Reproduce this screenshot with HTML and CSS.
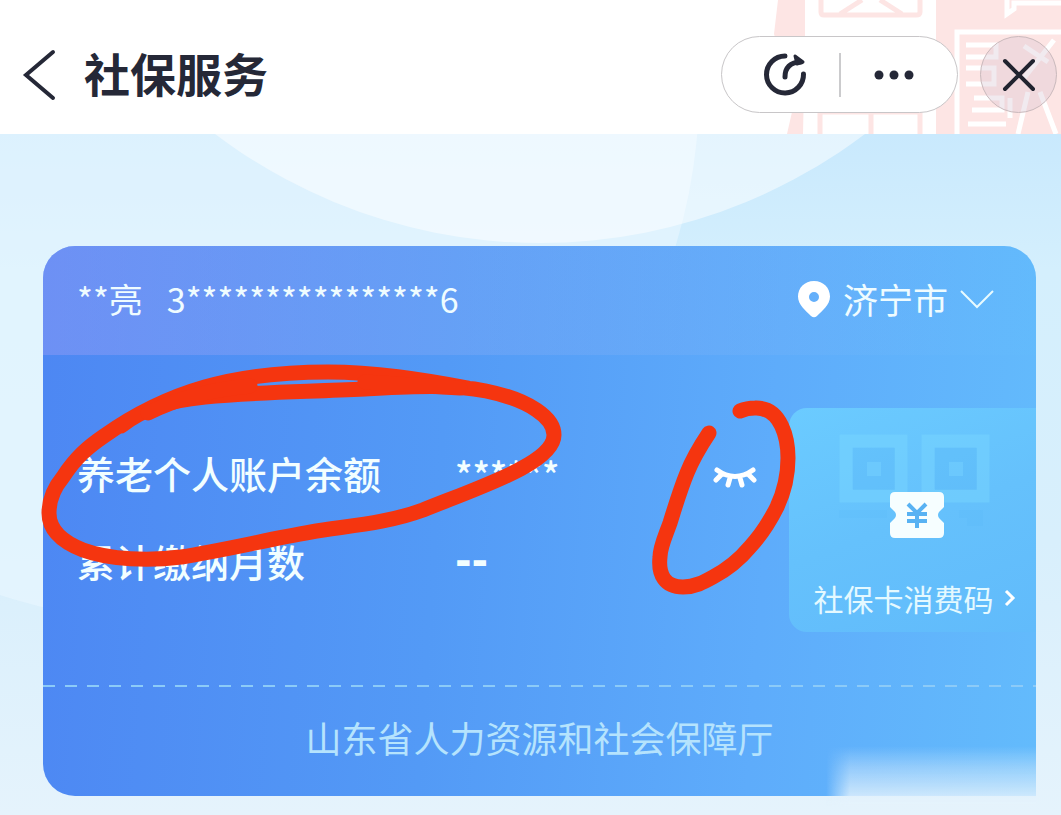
FILE: index.html
```html
<!DOCTYPE html>
<html lang="zh-CN">
<head>
    <meta charset="UTF-8">
    <meta name="viewport" content="width=device-width, initial-scale=1.0">
    <title>社保服务</title>
    <link rel="stylesheet" href="styles.css">
</head>
<body>
    <header class="navbar">
        <svg class="seal" viewBox="0 0 291 134" width="291" height="134" aria-hidden="true">
            <g fill="#fde5e4">
                <path d="M8 0H35V38L33 134H17L22 112L12 60L4 34Z"/>
                <path d="M166 0H291V134H166Z"/>
            </g>
            <g fill="none" stroke="#fde5e4" stroke-width="5">
                <path d="M51 0V12Q51 15 54 15H146Q150 15 150 12V0M70 14L92 0M132 14L110 0"/>
                <path d="M50 134V112H150V134M101 112V134"/>
            </g>
            <g fill="none" stroke="#fff" stroke-width="5">
                <path d="M237 0V14L244 9V3H291M187 134V32H291"/>
                <path d="M196 45H226V57H196M196 68H224V84H196M204 98H232V110H202M198 124H236"/>
                <path d="M254 46L278 62M284 40L254 78M258 92L248 134M270 92L286 134M240 98V118"/>
            </g>
        </svg>
        <button class="icon-button back" type="button" aria-label="返回">
            <svg viewBox="0 0 34 52" width="34" height="52"><path d="M31 3L4 26L31 49" fill="none" stroke="#252837" stroke-width="4" stroke-linecap="round"/></svg>
        </button>
        <h1 class="title">社保服务</h1>
        <div class="capsule">
            <button class="icon-button" type="button" aria-label="重新进入">
                <svg viewBox="0 0 44 44" width="44" height="44" fill="none" stroke="#252837" stroke-width="5" stroke-linecap="round" stroke-linejoin="round">
                    <path d="M22 3A18.500 18.500 0 1 0 40.500 21"/>
                    <path d="M22 24C22 15 27 9 38 9"/>
                    <path d="M32 3L40 9L34 11Z" fill="#252837" stroke-width="3"/>
                </svg>
            </button>
            <span class="capsule-line"></span>
            <button class="icon-button" type="button" aria-label="更多">
                <svg viewBox="0 0 40 12" width="40" height="12" fill="#252837"><circle cx="5" cy="6" r="4.500"/><circle cx="20" cy="6" r="4.500"/><circle cx="35" cy="6" r="4.500"/></svg>
            </button>
        </div>
        <button class="icon-button close" type="button" aria-label="关闭">
            <svg viewBox="0 0 34 34" width="34" height="34"><path d="M3 3L31 31M31 3L3 31" stroke="#20232f" stroke-width="4" stroke-linecap="round"/></svg>
        </button>
    </header>

    <main class="page">
        <svg class="page-bg" viewBox="0 134 1061 681" preserveAspectRatio="xMidYMin slice" aria-hidden="true">
            <circle cx="167" cy="90" r="532" fill="#e9f7ff" fill-opacity="0.6"/>
            <circle cx="540" cy="-296" r="539" fill="#fff" fill-opacity="0.5"/>
        </svg>

        <section class="card">
            <div class="card-head">
                <div class="user">
                    <span>**亮</span>
                    <span>3****************6</span>
                </div>
                <button class="city" type="button">
                    <svg viewBox="0 0 34 38" width="34" height="38"><path fill="#fff" fill-rule="evenodd" d="M17 1C7.500 1 1 8 1 16.500C1 25 9 31 14 36Q17 38.500 20 36C25 31 33 25 33 16.500C33 8 26.500 1 17 1ZM17 12A5 5 0 1 1 17 22A5 5 0 1 1 17 12Z"/></svg>
                    <span>济宁市</span>
                    <svg viewBox="0 0 34 20" width="34" height="20"><path d="M1 2L17 18L33 2" fill="none" stroke="#e8fbff" stroke-width="2"/></svg>
                </button>
            </div>

            <div class="card-body">
                <dl class="account">
                    <div class="row">
                        <dt>养老个人账户余额</dt>
                        <dd>******</dd>
                        <dd class="toggle">
                            <button class="icon-button" type="button" aria-label="显示余额">
                                <svg viewBox="0 0 44 24" width="44" height="24" fill="none" stroke="#fff" stroke-width="5" stroke-linecap="round"><path d="M4 5Q22 18 40 5M8 10L3 15M17 13L15 20M27 13L29 20M36 10L41 15"/></svg>
                            </button>
                        </dd>
                    </div>
                    <div class="row">
                        <dt>累计缴纳月数</dt>
                        <dd class="empty">--</dd>
                    </div>
                </dl>
                <a class="pay-code" href="#">
                    <svg viewBox="0 0 152 118" width="152" height="118" aria-hidden="true">
                        <g fill="none" stroke="#7ad6ff" stroke-opacity="0.450" stroke-width="13">
                            <path d="M7 7H62V62H7ZM89 7H144V62H89Z"/>
                        </g>
                        <g fill="#54b3f4" fill-opacity="0.220"><path d="M14 14H56V56H14ZM96 14H138V56H96Z"/></g>
                        <g fill="#54b3f4" fill-opacity="0.120"><path d="M0 76H48V84H0ZM120 76H144V92H128V84H120Z"/></g>
                        <g fill="#76d2ff" fill-opacity="0.500"><path d="M28 28H42V42H28ZM110 28H124V42H110Z"/></g>
                        <path fill="#f6feff" d="M56 58H100Q105 58 105 63V73L100 78Q98 81 100 84L105 89V99Q105 104 100 104H56Q51 104 51 99V89L56 84Q58 81 56 78L51 73V63Q51 58 56 58Z"/>
                        <path d="M69 70L78 79L87 70M68 80H88M68 87H88M78 79V94" fill="none" stroke="#58b2f3" stroke-width="4"/>
                    </svg>
                    <span class="pay-label">社保卡消费码
                        <svg viewBox="0 0 12 18" width="12" height="18"><path d="M2 2L9 9L2 16" fill="none" stroke="#fff" stroke-width="3"/></svg>
                    </span>
                </a>
            </div>

            <footer class="card-foot">山东省人力资源和社会保障厅</footer>
            <div class="smudge"></div>

            <svg class="marks" viewBox="43 246 993 550" width="993" height="550" aria-hidden="true">
                <path d="M121 426C143 409 165 401 205 397C255 392 300 392 365 389C405 387 450 384 486 391C530 400 554 418 554 435C554 463 480 487 423 510C385 524 345 526 311 532C265 540 225 550 181 557C150 561 110 560 83 550C60 541 49 528 49 513C49 500 53 489 63 477C76 457 88 447 104 436C135 414 170 397 205 387C240 377 285 372 328 372C375 372 420 379 468 388"/>
                <path d="M148 413C175 400 205 390 250 386M365 382C400 384 430 386 460 388"/>
                <path d="M709 433C699 448 693 458 687 473C680 490 675 507 670 523C665 537 660 547 660 557C658 575 665 587 683 587C695 587 704 582 713 577C730 568 740 559 750 547C763 533 771 519 777 507C785 490 788 475 788 458C788 440 782 407 755 408Q747 408 740 411"/>
            </svg>
        </section>
    </main>
</body>
</html>
```
FILE: styles.css
```css
* {
    box-sizing: border-box;
    margin: 0;
    padding: 0;
}
body {
    display: flex;
    flex-direction: column;
    min-height: 100vh;
    font-family: "Noto Sans CJK SC", "Noto Sans", sans-serif;
    color: #fff;
    overflow-x: hidden;
}
button {
    font: inherit;
    color: inherit;
    background: none;
    border: none;
    cursor: pointer;
}
svg {
    display: block;
    flex-shrink: 0;
}
.icon-button {
    display: flex;
    align-items: center;
    justify-content: center;
}

/* 顶部导航 */
.navbar {
    position: relative;
    display: flex;
    align-items: center;
    padding: 36px 4px 21px 22px;
    background-color: #fff;
}
.seal {
    position: absolute;
    top: 0;
    right: 0;
}
.title {
    flex: 1;
    margin-left: 28px;
    padding-bottom: 6px;
    font-size: 46px;
    line-height: 56px;
    font-weight: 700;
    color: #252837;
}
.capsule {
    position: relative;
    display: flex;
    align-items: center;
    width: 237px;
    height: 77px;
    margin-right: 22px;
    border: 1px solid #c8c6c8;
    border-radius: 40px;
    background-color: #fff;
}
.capsule .icon-button {
    flex: 1;
    height: 100%;
    padding-left: 10px;
}
.capsule .icon-button:last-child {
    padding: 0 10px 0 0;
}
.capsule-line {
    width: 2px;
    height: 44px;
    background-color: #cbcbcd;
}
.close {
    position: relative;
    width: 77px;
    height: 77px;
    border: 1px solid #c9b9bc;
    border-radius: 50%;
    background-color: rgba(215, 195, 210, 0.35);
}

/* 页面背景 */
.page {
    position: relative;
    flex: 1;
    padding: 112px 25px 19px 43px;
    background: linear-gradient(#c9e9fd, #d4effd 20%, #d8effc 60%, #e5f3fc);
}
.page-bg {
    position: absolute;
    top: 0;
    left: 0;
    width: 100%;
    height: 100%;
}

/* 社保卡片 */
.card {
    position: relative;
    border-radius: 32px 32px 0 32px;
    background: linear-gradient(94deg, #4d87f3, #539af6 40%, #5eacfb 72%, #63bbfc);
}
.card-head {
    display: flex;
    align-items: center;
    justify-content: space-between;
    height: 109px;
    padding: 0 42px 4px 34px;
    border-radius: 32px 32px 0 0;
    background: linear-gradient(90deg, rgba(158, 158, 246, 0.4), rgba(140, 175, 245, 0.3) 45%, rgba(99, 189, 252, 0.2));
    font-size: 34px;
    color: #effcff;
}
.user {
    display: flex;
    gap: 24px;
}
.city {
    display: flex;
    align-items: center;
    gap: 12px;
    font-size: 35px;
}
.card-body {
    display: flex;
    align-items: center;
    justify-content: space-between;
    height: 330px;
    padding-left: 34px;
}
.account {
    display: grid;
    gap: 32px;
    flex: 1;
    padding-bottom: 6px;
    font-size: 38px;
    line-height: 56px;
    font-weight: 500;
    color: #f2feff;
}
.row {
    display: grid;
    grid-template-columns: 378px 1fr 76px;
    align-items: center;
}
.row dd {
    font-size: 36px;
}
.row .empty {
    font-family: "DejaVu Sans", sans-serif;
    font-size: 40px;
    font-weight: 700;
}
.toggle {
    display: flex;
    padding-top: 8px;
}
.pay-code {
    display: flex;
    flex-direction: column;
    align-items: center;
    justify-content: space-between;
    width: 247px;
    height: 224px;
    padding: 26px 20px 12px 24px;
    border-radius: 18px 0 0 18px;
    background: linear-gradient(160deg, #6bcbff, #65c1fc 50%, #61bbfb);
    color: #e4f9ff;
    text-decoration: none;
}
.pay-label {
    display: flex;
    align-items: center;
    gap: 10px;
    font-size: 30px;
    line-height: 44px;
    white-space: nowrap;
}
.card-foot {
    height: 111px;
    background: repeating-linear-gradient(90deg, #8ccbf8 0, #8ccbf8 12px, transparent 12px, transparent 22px) top / 100% 2px no-repeat;
    font-size: 36px;
    line-height: 104px;
    text-align: center;
    color: #b5e3fd;
}
.smudge {
    position: absolute;
    right: 0;
    bottom: -10px;
    width: 210px;
    height: 60px;
    background: linear-gradient(rgba(226, 241, 252, 0), rgba(226, 241, 252, 0.4) 35%, rgba(226, 241, 252, 0.8) 80%, #e5f3fc);
    -webkit-mask-image: linear-gradient(90deg, transparent, #000 24px);
    mask-image: linear-gradient(90deg, transparent, #000 24px);
}

/* 手绘红圈 */
.marks {
    position: absolute;
    top: 0;
    left: 0;
    overflow: visible;
    fill: none;
    stroke: #f5350f;
    stroke-width: 15;
    stroke-linecap: round;
    stroke-linejoin: round;
    pointer-events: none;
}
```
